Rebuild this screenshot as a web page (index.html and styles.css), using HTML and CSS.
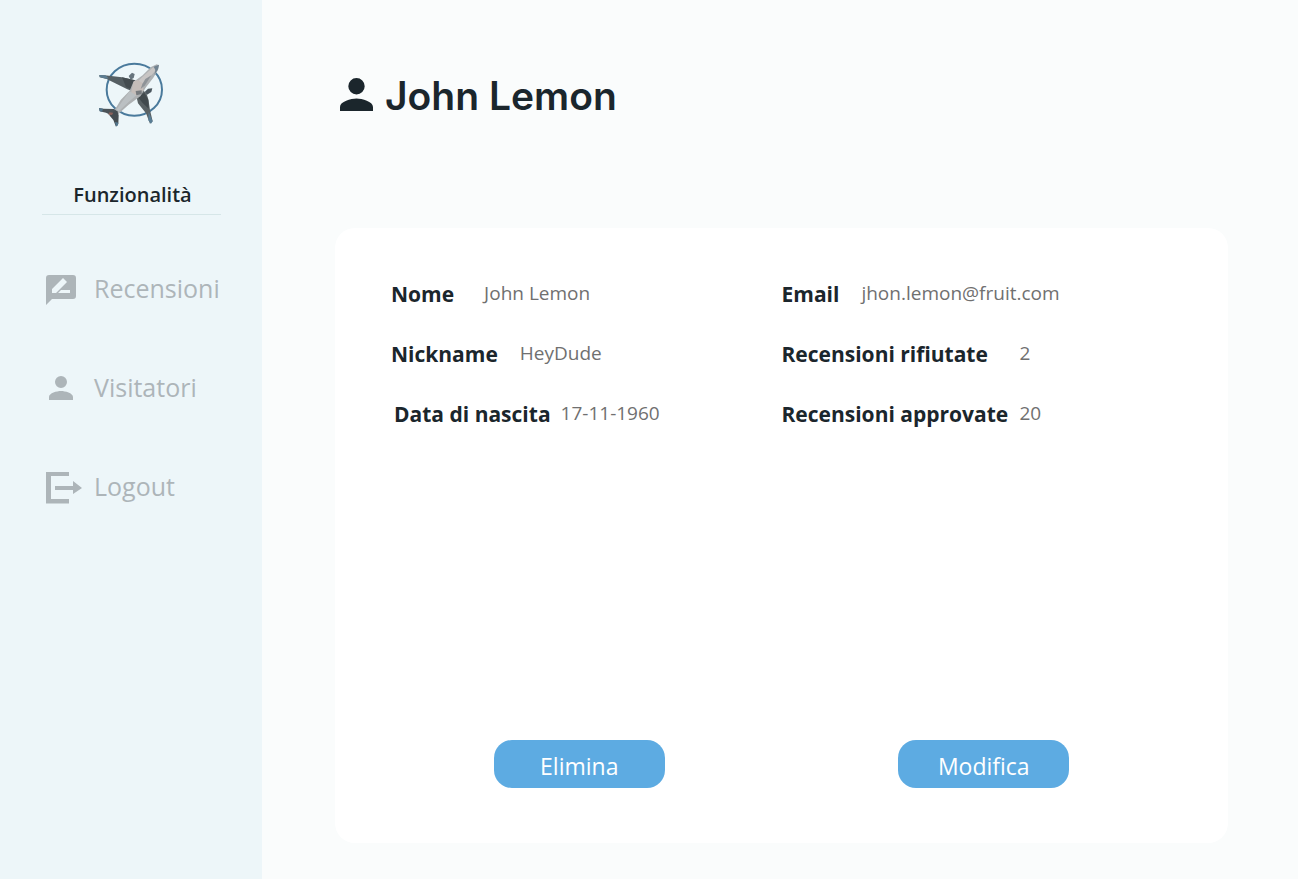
FILE: index.html
```html
<!DOCTYPE html>
<html lang="it">
<head>
<meta charset="utf-8">
<meta name="viewport" content="width=device-width, initial-scale=1">
<title>John Lemon</title>
<link rel="stylesheet" href="styles.css">
</head>
<body>
<div class="app">
  <aside class="sidebar">
    <svg class="logo" viewBox="0 0 252 252" aria-hidden="true">
      <ellipse cx="133" cy="113" rx="83" ry="78" fill="none" stroke="#4a7a9c" stroke-width="6"/>
      <path d="M28 69L44 70L96 76L132 84L150 94L128 118L112 112L50 81L29 76Z" fill="#565f63"/>
      <path d="M96 76L132 84L150 94L130 115L108 105Z" fill="#444c50"/>
      <path d="M28 69L46 70L56 79L48 80L29 75Z" fill="#5d7d92"/>
      <path d="M116 72L126 62L134 66L131 78L122 83Z" fill="#66747d"/>
      <path d="M138 128L158 113L170 126L175 142L180 174L188 208L180 215L168 184L144 154Z" fill="#596164"/>
      <path d="M144 136L163 122L175 144L176 170L158 153Z" fill="#41494d"/>
      <path d="M176 180L188 208L183 215L175 205Z" fill="#587d95"/>
      <path d="M164 120L174 110L187 109L184 120L171 128Z" fill="#4b565e"/>
      <path d="M200 37L207 40L204 54L190 77L168 106L151 133L116 158L85 186L67 196L64 186L80 164L92 144L119 116L130 90L158 70L183 45Z" fill="#aeb1b3"/>
      <path d="M187 48L202 42L193 60L166 89L153 104L137 94L157 75Z" fill="#c8c5c4"/>
      <path d="M131 88L143 84L159 94L160 115L137 133L123 122Z" fill="#c5bdb9"/>
      <path d="M119 118L139 130L115 151L88 176L75 179L98 146Z" fill="#bbc0c3"/>
      <path d="M191 44L207 38L204 52L193 69L196 54Z" fill="#718391"/>
      <path d="M166 81L184 70L165 100L152 111L157 96Z" fill="#8e9398"/>
      <path d="M137 117L155 115L155 126L139 130Z" fill="#767a7e"/>
      <path d="M27 168L41 170L72 171L82 178L70 193L48 182L29 178Z" fill="#4c5358"/>
      <path d="M66 181L82 176L86 190L85 216L78 224L70 204L58 190Z" fill="#454c51"/>
      <path d="M58 181L70 182L66 189L55 188Z" fill="#8a615b"/>
      <path d="M27 168L39 170L36 180L29 177ZM75 210L85 212L83 221L78 223Z" fill="#53778f"/>
    </svg>
    <h2 class="sidebar-title">Funzionalità</h2>
    <nav class="menu">
      <a class="menu-link" href="#recensioni">
        <svg class="menu-icon" viewBox="0 0 36 36" aria-hidden="true"><path fill="currentColor" fill-rule="evenodd" d="M3 5H27Q30 5 30 8V26Q30 29 27 29H6L0 35V8Q0 5 3 5ZM6 23H10L21 12L17 8L6 19ZM12 23H24V20H15Z"/></svg>
        <span>Recensioni</span>
      </a>
      <a class="menu-link" href="#visitatori">
        <svg class="menu-icon" viewBox="0 0 36 36" aria-hidden="true"><path fill="currentColor" d="M15 7a6 6 0 1 1 0 12a6 6 0 0 1 0-12ZM3 31V28C3 24 11 22 15 22S27 24 27 28V31Z"/></svg>
        <span>Visitatori</span>
      </a>
      <a class="menu-link" href="#logout">
        <svg class="menu-icon" viewBox="0 0 36 36" aria-hidden="true"><path fill="currentColor" d="M0 4H23V8H5V31H23V35.500H0ZM9 18H27V13L36 20L27 26V22H9Z"/></svg>
        <span>Logout</span>
      </a>
    </nav>
  </aside>
  <main class="content">
    <header class="page-header">
      <svg class="header-icon" viewBox="0 0 33 33" aria-hidden="true"><path fill="currentColor" d="M16.500 0a8.200 8.200 0 1 1 0 16.400a8.200 8.200 0 0 1 0-16.400ZM0 33V29C0 23.500 11 20.500 16.500 20.500S33 23.500 33 29V33Z"/></svg>
      <h1 class="page-title">John Lemon</h1>
    </header>
    <section class="card">
      <div class="details">
        <dl class="fields">
          <div class="field field-wide"><dt>Nome</dt><dd>John Lemon</dd></div>
          <div class="field"><dt>Nickname</dt><dd>HeyDude</dd></div>
          <div class="field field-tight"><dt>Data di nascita</dt><dd>17-11-1960</dd></div>
        </dl>
        <dl class="fields">
          <div class="field"><dt>Email</dt><dd>jhon.lemon@fruit.com</dd></div>
          <div class="field field-count"><dt>Recensioni rifiutate</dt><dd>2</dd></div>
          <div class="field field-count"><dt>Recensioni approvate</dt><dd>20</dd></div>
        </dl>
      </div>
      <div class="actions">
        <button class="button" type="button">Elimina</button>
        <button class="button" type="button">Modifica</button>
      </div>
    </section>
  </main>
</div>
</body>
</html>
```
FILE: styles.css
```css
* {
  box-sizing: border-box;
}

body {
  margin: 0;
  background: #fafcfc;
  color: #1b262c;
  font-family: "Open Sans", "Noto Sans", sans-serif;
}

.app {
  display: flex;
  min-height: 100vh;
}

.sidebar {
  display: flex;
  flex: none;
  flex-direction: column;
  width: 262px;
  padding: 52px 41px 0 42px;
  background: #edf6f9;
}

.logo {
  width: 84px;
  height: 84px;
  margin-left: 48px;
}

.sidebar-title {
  margin: 42px 0 0;
  padding: 0 0 2px 2px;
  border-bottom: 1px solid #d6e6e8;
  font-size: 20px;
  font-weight: 600;
  line-height: 34px;
  text-align: center;
}

.menu {
  display: flex;
  flex-direction: column;
  gap: 63px;
  margin-top: 55px;
  padding-left: 4px;
}

.menu-link {
  display: flex;
  align-items: center;
  gap: 12px;
  color: #adb5b9;
  font-size: 25px;
  font-weight: 500;
  line-height: 36px;
  text-decoration: none;
}

.menu-icon {
  flex: none;
  width: 36px;
  height: 36px;
}

.content {
  display: flex;
  flex: 1;
  flex-direction: column;
  padding: 68px 70px 36px 73px;
}

.page-header {
  display: flex;
  align-items: center;
  gap: 12px;
  padding-left: 5px;
}

.header-icon {
  width: 33px;
  height: 33px;
  margin-bottom: 2px;
}

.page-title {
  margin: 0;
  padding-top: 2px;
  font-family: Inter, sans-serif;
  font-size: 39px;
  font-weight: 600;
  line-height: 52px;
}

.card {
  display: flex;
  flex: 1;
  flex-direction: column;
  justify-content: space-between;
  margin-top: 106px;
  padding: 36px 56px 55px;
  border-radius: 20px;
  background: #fff;
}

.details {
  display: grid;
  grid-template-columns: 1fr 1fr;
}

.fields {
  margin: 0;
}

.field {
  display: flex;
  align-items: center;
  gap: 22px;
  height: 60px;
}

.field-wide {
  gap: 30px;
}

.field-tight {
  gap: 10px;
  padding-left: 3px;
}

.field-count {
  display: grid;
  grid-template-columns: 228px auto;
  justify-content: start;
  gap: 10px;
}

dt {
  font-size: 21px;
  font-weight: 700;
  line-height: 32px;
  white-space: nowrap;
}

dd {
  margin: 0;
  padding-bottom: 2px;
  color: #707070;
  font-size: 19px;
  line-height: 32px;
}

.actions {
  display: grid;
  grid-template-columns: 1fr 1fr;
  column-gap: 28px;
  justify-items: center;
}

.button {
  width: 171px;
  height: 48px;
  padding: 4px 0 0;
  border: 0;
  border-radius: 18px;
  background: #5dabe2;
  color: #fff;
  font-family: inherit;
  font-size: 23px;
  line-height: 32px;
}
```
